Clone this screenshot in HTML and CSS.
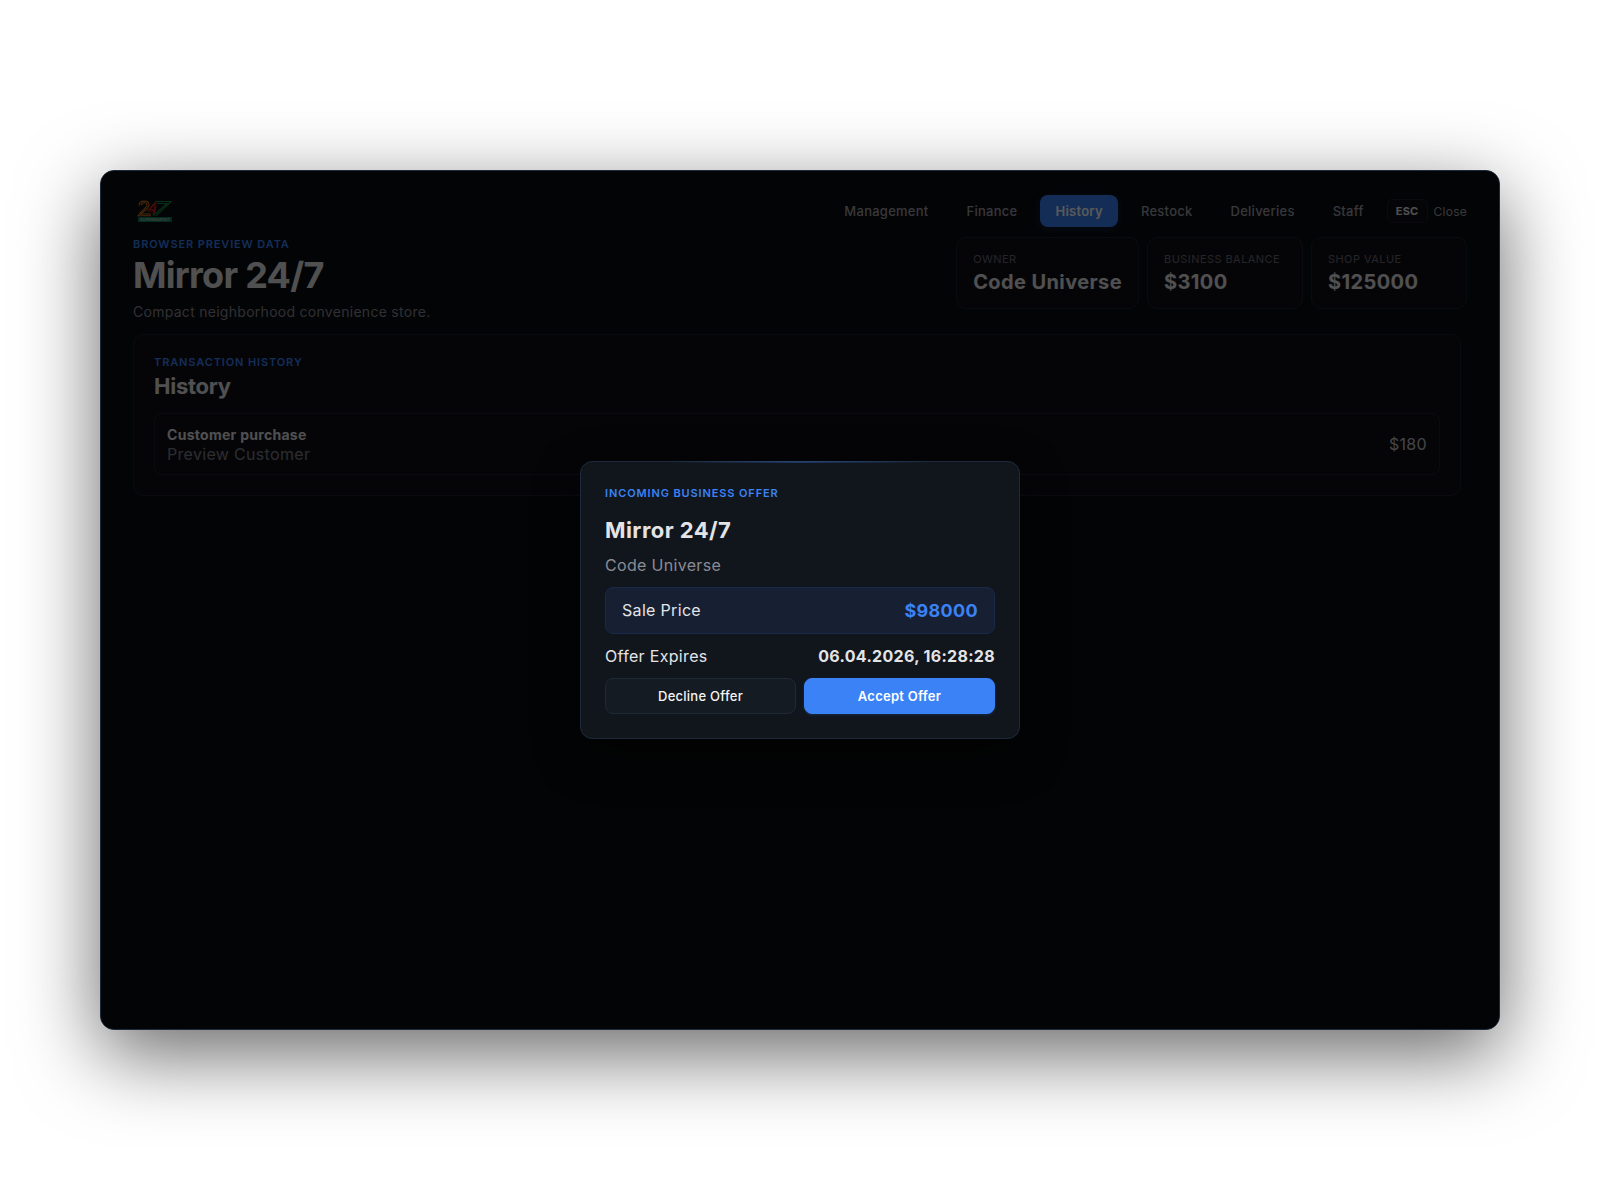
FILE: index.html
```html
<!DOCTYPE html>
<html lang="en">
<head>
<meta charset="UTF-8">
<meta name="viewport" content="width=device-width, initial-scale=1.0">
<title>Mirror 24/7</title>
<link rel="stylesheet" href="styles.css">
</head>
<body>
<div class="shell">
<header class="topbar">
<svg class="logo" viewBox="0 0 36 22" width="36" height="22">
<g fill="none" stroke-width="1.1">
<path stroke="#d0781e" d="M2 5.5C2.500 -0.500 12 0 12 5C12 8 7 11 4 14H14M4 5.500C5 2 10 2 10 5C10 7.500 4 11 1 15.800H14"/>
<path stroke="#c01c24" d="M19 1.500L10.500 11H19M16 14.500L18.500 3.500L12.500 9.500H19M19 6L17 15"/>
<path stroke="#188a44" d="M19 1.500H34L19 15.800M20 3.500H30L16 15.800"/>
</g>
<rect x="1" y="17" width="34" height="5" fill="#107c5a"/>
<text class="logo-text" x="3" y="21" textLength="30">SUPERMARKET</text>
</svg>
<nav class="nav">
<button class="nav-btn">Management</button>
<button class="nav-btn">Finance</button>
<button class="nav-btn active">History</button>
<button class="nav-btn">Restock</button>
<button class="nav-btn">Deliveries</button>
<button class="nav-btn">Staff</button>
<div class="close-hint"><kbd>ESC</kbd><span>Close</span></div>
</nav>
</header>
<section class="hero">
<div class="hero-copy">
<p class="eyebrow">Browser preview data</p>
<h1>Mirror 24/7</h1>
<p class="hero-desc">Compact neighborhood convenience store.</p>
</div>
<div class="stats">
<div class="stat"><span>Owner</span><strong>Code Universe</strong></div>
<div class="stat"><span>Business balance</span><strong>$3100</strong></div>
<div class="stat"><span>Shop value</span><strong>$125000</strong></div>
</div>
</section>
<main class="panel">
<p class="eyebrow">Transaction history</p>
<h2>History</h2>
<div class="history-row">
<div class="history-info">
<strong>Customer purchase</strong>
<span>Preview Customer</span>
</div>
<span class="amount">$180</span>
</div>
</main>
<div class="overlay">
<div class="modal">
<p class="eyebrow">Incoming business offer</p>
<h3>Mirror 24/7</h3>
<p class="buyer">Code Universe</p>
<div class="price-box"><span>Sale Price</span><strong>$98000</strong></div>
<div class="expires"><span>Offer Expires</span><strong>06.04.2026, 16:28:28</strong></div>
<div class="actions">
<button class="btn">Decline Offer</button>
<button class="btn btn-primary">Accept Offer</button>
</div>
</div>
</div>
</div>
</body>
</html>
```
FILE: styles.css
```css
* {
box-sizing: border-box;
}
body {
margin: 0;
height: 1200px;
display: flex;
align-items: center;
justify-content: center;
background: #fff;
font-family: Inter, sans-serif;
font-size: 16px;
letter-spacing: 0.32px;
color: #e4e4e7;
overflow: hidden;
}
h1, h2, h3, p {
margin: 0;
}
button, kbd {
font-family: inherit;
}
.shell {
position: relative;
width: 1400px;
height: 860px;
padding: 24px 32px;
background: #0a0c11;
border: 1px solid #1e293b;
border-radius: 14px;
box-shadow: 0 24px 80px rgba(0, 0, 0, 0.6);
}
.topbar {
display: flex;
justify-content: space-between;
align-items: center;
height: 32px;
}
.logo {
margin-left: 4px;
}
.logo-text {
font-size: 4px;
font-weight: 600;
letter-spacing: 0;
fill: #a8c4b8;
}
.nav {
display: flex;
align-items: center;
gap: 8px;
}
.nav-btn {
height: 32px;
padding: 0 15px;
border: none;
border-radius: 8px;
background: none;
color: #a1a1aa;
font-size: 13px;
font-weight: 500;
letter-spacing: 0.26px;
}
.nav-btn.active {
background: #3b82f6;
color: #fff;
font-weight: 600;
box-shadow: 0 2px 8px rgba(59, 130, 246, 0.2);
}
.close-hint {
display: flex;
align-items: center;
gap: 6px;
font-size: 12px;
letter-spacing: 0.24px;
color: #a1a1aa;
}
kbd {
width: 41px;
height: 24px;
text-align: center;
line-height: 22px;
border: 1px solid #1e212b;
border-radius: 5px;
background: #0f1119;
color: #e4e4e7;
font-size: 11px;
font-weight: 700;
}
.hero {
display: flex;
justify-content: space-between;
align-items: flex-start;
margin-top: 10px;
height: 97px;
}
.eyebrow {
font-size: 11px;
line-height: 14px;
font-weight: 600;
letter-spacing: 0.88px;
text-transform: uppercase;
color: #3b82f6;
}
h1 {
margin-top: 4px;
font-size: 36px;
line-height: 40px;
font-weight: 700;
letter-spacing: -0.72px;
}
.hero-desc {
margin-top: 8px;
font-size: 14px;
line-height: 18px;
letter-spacing: 0.28px;
color: #8b8b94;
}
.stats {
display: flex;
gap: 8px;
}
.stat {
display: flex;
flex-direction: column;
min-width: 156px;
height: 72px;
padding: 14px 16px;
background: #0f1119;
border: 1px solid #1e212b;
border-radius: 10px;
}
.stat span {
font-size: 11px;
line-height: 14px;
letter-spacing: 0.44px;
text-transform: uppercase;
color: #6b6b76;
}
.stat strong {
margin-top: 4px;
font-size: 20px;
line-height: 24px;
font-weight: 700;
letter-spacing: 0.4px;
}
.panel {
width: 1328px;
height: 162px;
padding: 20px;
background: #0f1119;
border: 1px solid #1e212b;
border-radius: 10px;
}
h2 {
margin-top: 4px;
font-size: 22px;
line-height: 26px;
font-weight: 700;
letter-spacing: -0.25px;
}
.history-row {
display: flex;
justify-content: space-between;
align-items: center;
height: 62px;
margin-top: 14px;
padding: 0 12px;
border: 1px solid #1e212b;
border-radius: 8px;
}
.history-info {
display: flex;
flex-direction: column;
}
.history-info strong {
font-size: 14px;
line-height: 19px;
letter-spacing: 0.28px;
}
.history-info span {
line-height: 20px;
color: #80808a;
}
.amount {
color: #c4c4cc;
}
.overlay {
position: absolute;
inset: 0;
display: flex;
align-items: center;
justify-content: center;
background: rgba(0, 0, 0, 0.65);
border-radius: 13px;
}
.modal {
position: relative;
width: 440px;
height: 278px;
padding: 24px;
background: #11161d;
border: 1px solid #1e293b;
border-radius: 12px;
box-shadow: 0 16px 48px rgba(0, 0, 0, 0.45);
}
/* thin highlight along the top edge */
.modal::before {
content: "";
position: absolute;
top: -1px;
left: 20%;
right: 20%;
height: 2px;
background: linear-gradient(90deg, transparent, rgba(59, 130, 246, 0.3), transparent);
}
h3 {
margin-top: 16px;
font-size: 22px;
line-height: 28px;
font-weight: 700;
letter-spacing: 0.44px;
}
.buyer {
margin-top: 11px;
line-height: 20px;
color: #8b8b96;
}
.price-box {
display: flex;
justify-content: space-between;
align-items: center;
height: 47px;
margin-top: 12px;
padding: 0 16px;
background: #162032;
border: 1px solid #182a49;
border-radius: 8px;
}
.price-box span {
line-height: 20px;
margin-top: -1px;
}
.price-box strong {
font-size: 18px;
color: #3b82f6;
}
.expires {
display: flex;
justify-content: space-between;
height: 20px;
line-height: 20px;
margin-top: 12px;
}
.actions {
display: flex;
gap: 8px;
margin-top: 12px;
}
.btn {
flex: 1;
height: 36px;
padding: 0;
border: 1px solid #1f2937;
border-radius: 8px;
background: #151b22;
color: #f4f4f5;
font-size: 13px;
font-weight: 500;
letter-spacing: 0.26px;
}
.btn-primary {
border-color: #3b82f6;
background: #3b82f6;
color: #fff;
font-weight: 600;
box-shadow: 0 1px 3px rgba(59, 130, 246, 0.2);
}
```
